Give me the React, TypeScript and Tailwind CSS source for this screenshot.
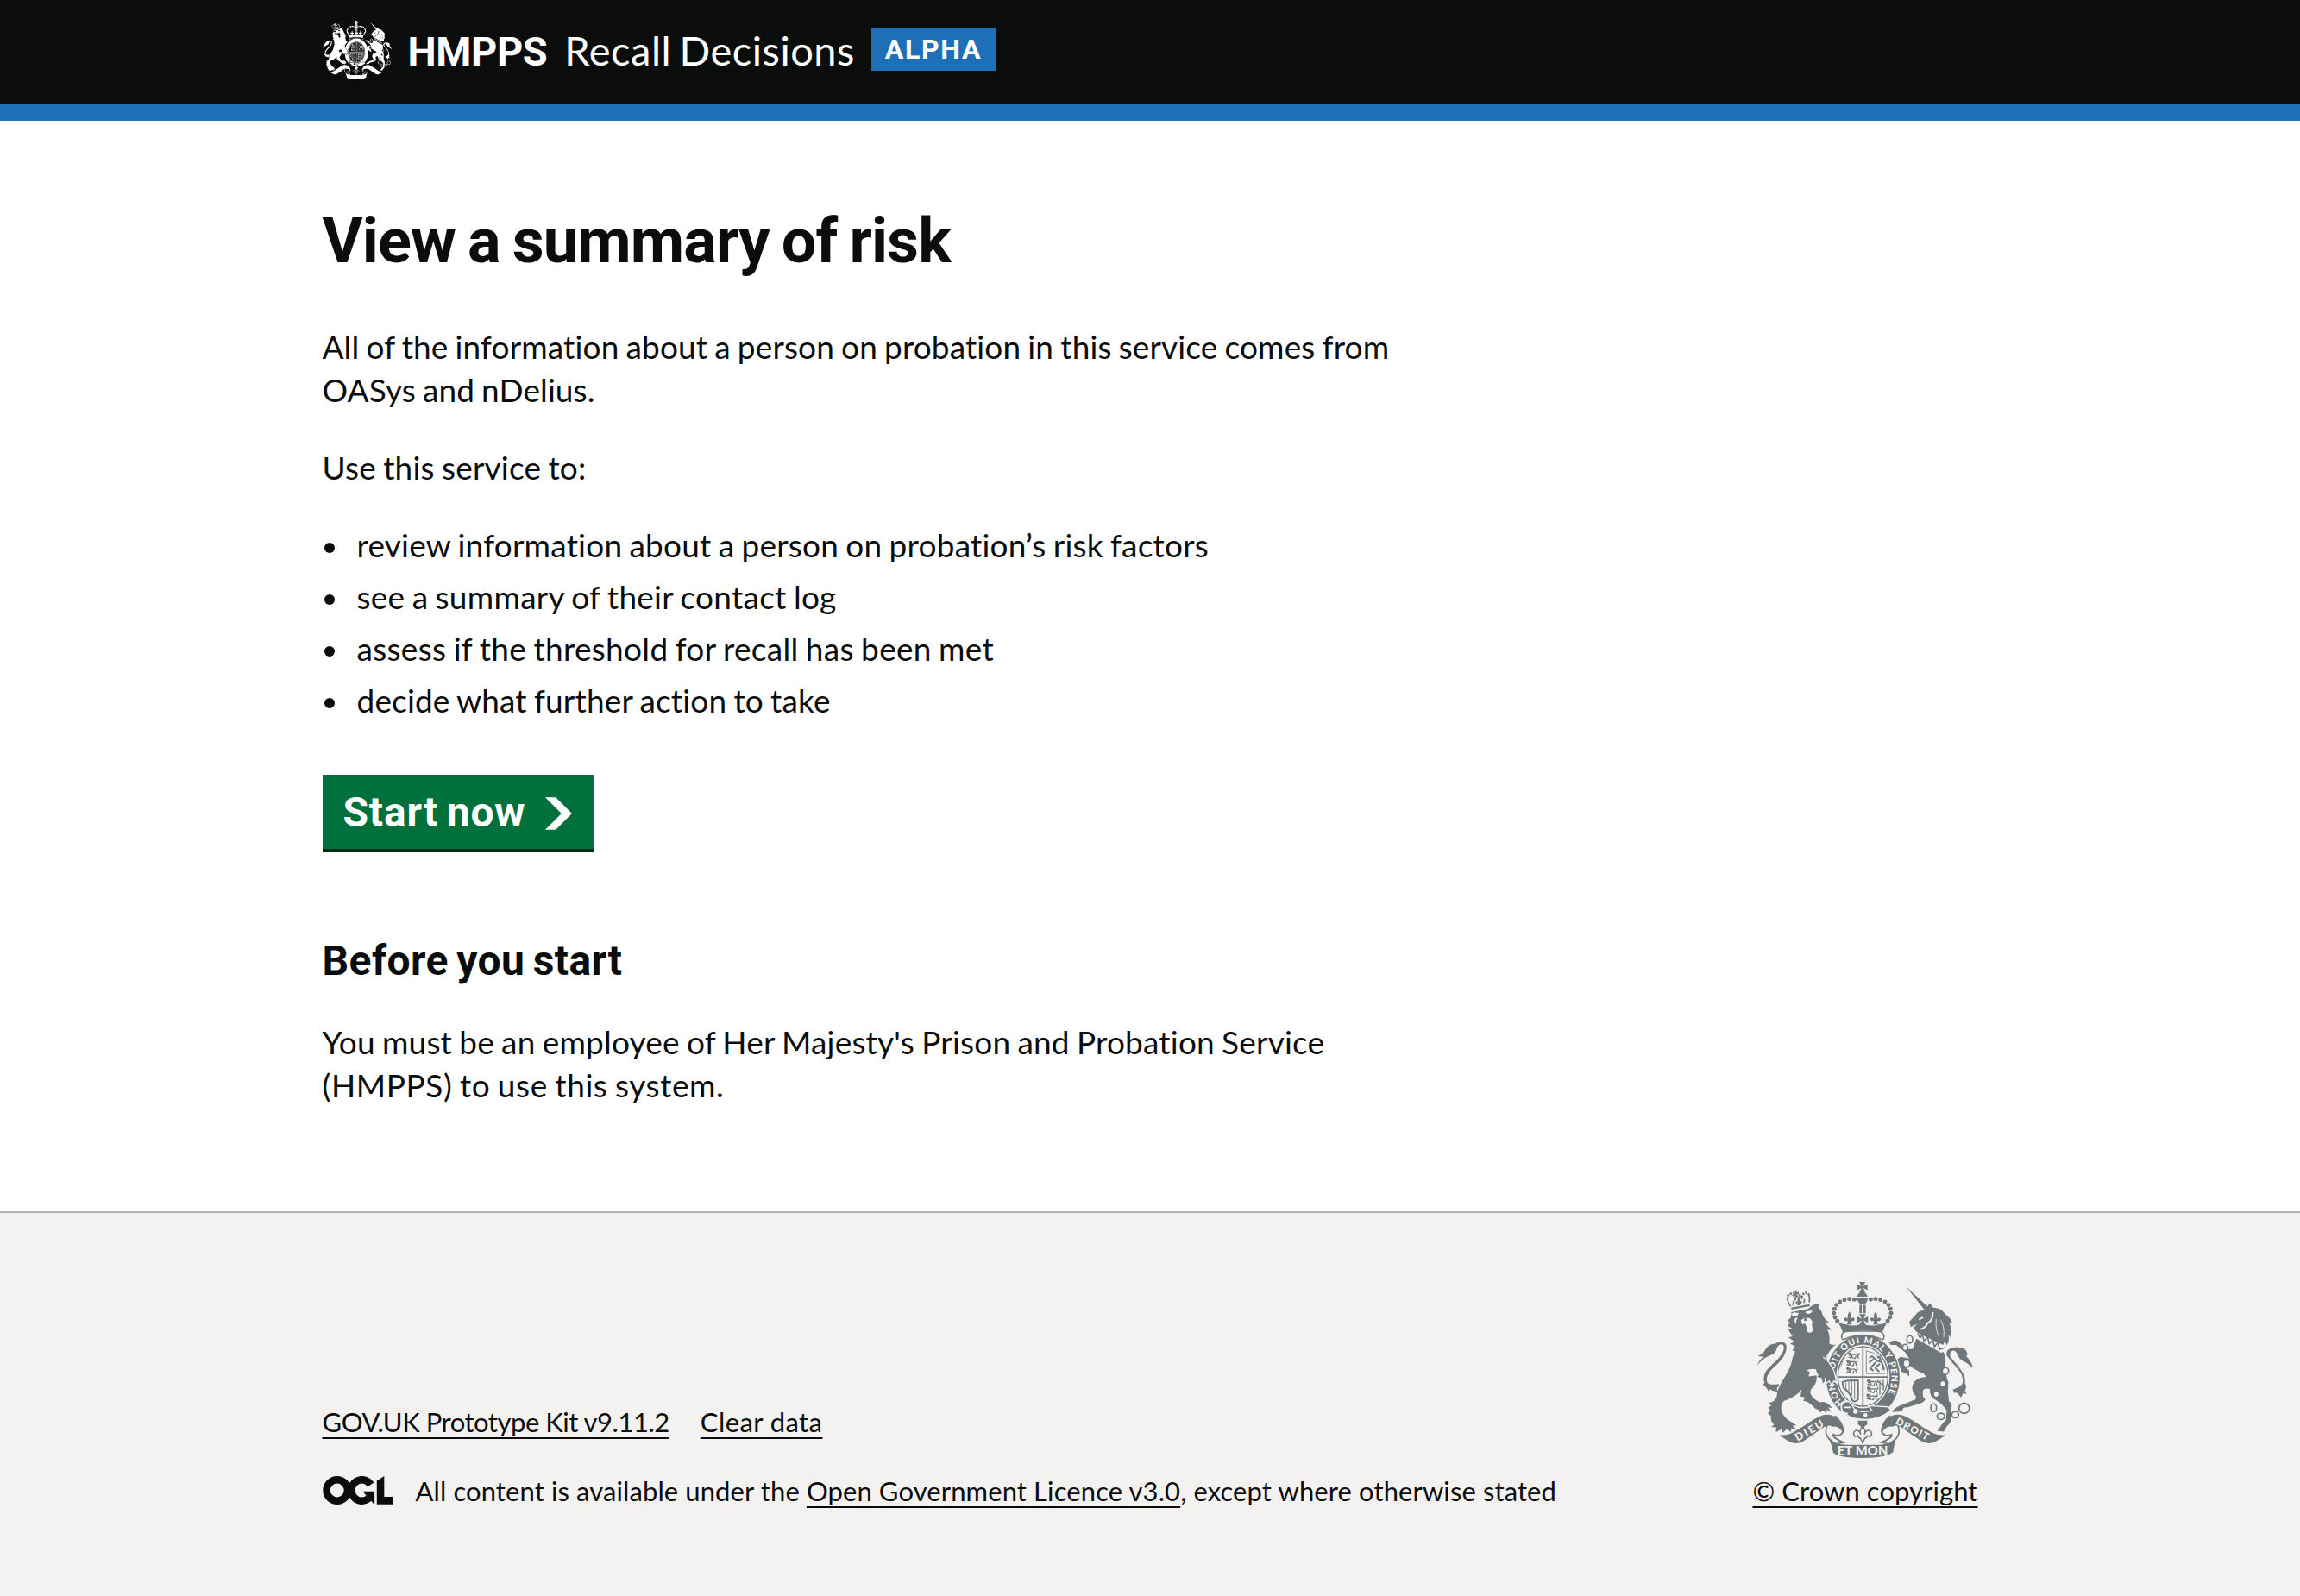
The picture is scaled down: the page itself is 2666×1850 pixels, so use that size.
import type { ReactNode } from "react";

type CrestProps = { className: string; paper: string; motto?: boolean };

/* One half of the royal crown's pearl arch; the other half is mirrored. */
const PEARLS: [number, number][] = [
  [421, 108], [404, 106], [387, 109], [371, 116], [359, 127], [352, 141],
  [350, 156], [354, 170], [362, 183],
];

/* A walking lion, used three times in each English quarter of the shield. */
function SmallLion({ x, y }: { x: number; y: number }) {
  return (
    <g transform={`translate(${x} ${y})`}>
      <path
        d="M2 3q5-5 9 0l3 3h14q6 0 6 5l3 9M4 9h9l-3 10M14 11l3 9M28 11l-3 9M34 8q8 0 4-8M2 15l9 2M20 19h7"
        fill="none"
        stroke="currentColor"
        strokeWidth="4"
        strokeLinejoin="round"
      />
      <circle cx="6" cy="4" r="4.5" fill="currentColor" />
    </g>
  );
}

function CrossPattee({ x, y, r }: { x: number; y: number; r: number }) {
  return (
    <path
      transform={`translate(${x} ${y}) scale(${r})`}
      fill="currentColor"
      d="M-.6-1H.6L.15-.15 1-.6V.6L.15.15.6 1H-.6L-.15.15-1 .6V-.6L-.15-.15z"
    />
  );
}

function Fleur({ x, y }: { x: number; y: number }) {
  return (
    <path
      transform={`translate(${x} ${y})`}
      fill="currentColor"
      d="M0-22Q9-10 5 4 11-4 17 1 21 7 13 12 9 8 5 13L9 23H-9L-5 13Q-9 8-13 12-21 7-17 1-11-4-5 4-9-10 0-22Z"
    />
  );
}

/* Ribbon with its fold, left side; mirrored for the right side. */
function RibbonSide({ paper }: { paper: string }) {
  return (
    <g>
      <path
        fill={paper}
        stroke="currentColor"
        strokeWidth="5"
        d="M326 548C316 574 326 590 345 602L352 612L384 606C362 596 344 588 348 578C362 586 380 580 383 566C382 545 372 530 355 515Z"
      />
      <path
        fill="currentColor"
        d="M160 580Q186 583 208 571C246 551 274 526 308 512C338 502 362 516 378 543Q385 560 381 573C374 556 358 547 345 552C336 544 324 547 310 556Q276 580 243 602Q222 612 205 607Q188 600 160 580Z"
      />
    </g>
  );
}

function RoyalArms({ className, paper, motto }: CrestProps) {
  return (
    <svg viewBox="84 47 750 613" preserveAspectRatio="none" className={className} aria-hidden="true">
      {/* Lion */}
      <g fill="currentColor">
        <path d="M84 338Q90 318 106 306Q94 308 86 305Q106 296 112 282Q124 262 146 262Q160 252 172 256Q190 262 184 286C176 318 148 336 130 356Q112 378 118 396Q126 408 158 402L160 410Q146 416 156 428Q140 430 128 420L122 428Q118 414 102 404Q112 402 106 388Q106 362 124 346C146 324 172 304 176 280Q178 266 168 264Q158 264 152 276Q150 296 126 304Q100 314 84 338Z" />
        <path d="M202 152L262 140Q280 120 298 124L296 136Q308 146 310 160Q316 176 334 188L320 187Q328 202 342 214L328 213Q338 236 334 262Q344 268 357 265Q338 280 328 300Q322 304 326 316Q342 334 348 356L360 388L356 408L349 390L343 410L335 390L326 404L322 388L312 400L306 378Q300 382 292 376L298 370Q288 366 290 352Q272 346 254 356Q262 358 266 360L262 376L290 372Q292 398 278 412Q266 422 268 434Q276 456 302 466Q316 462 332 472L344 486L330 484L342 500L326 492L324 504L312 494L302 502L298 492Q286 492 278 480Q258 460 244 462L248 448L234 446L238 420L230 432Q206 452 176 462Q164 474 168 496Q176 520 198 532L220 546L206 548L222 562L200 556L202 570L186 560L172 572L168 560L148 570L150 554L132 552L142 544Q128 530 132 514L120 504L130 496L122 484L132 478L124 468Q146 466 152 444C150 410 192 370 202 330Q206 306 216 288L206 286L214 270L198 262L212 254L192 240L206 236L192 214L204 208L188 200L198 188L188 182L200 172Z" />
      </g>
      <g fill="none" stroke="currentColor">
        <path d="M202 140L266 128" strokeWidth="7" />
        <path d="M200 132Q186 112 188 100M264 118Q268 104 262 88M228 124V98M208 128L210 112M246 120L248 106" strokeWidth="5" />
        <path d="M189 97Q204 76 216 104Q226 84 238 100Q246 76 264 90" strokeDasharray="7 4" strokeWidth="8" />
      </g>
      <CrossPattee x={218} y={86} r={10} />
      <CrossPattee x={228} y={118} r={10} />
      <g fill={paper}>
        <path d="M198 160L214 152Q222 156 228 154L224 164Q212 168 198 160ZM250 152Q262 144 276 148Q270 160 258 158Z" />
        <path d="M236 180Q248 168 268 174L276 186Q272 196 276 206Q280 222 266 224Q254 222 257 208L250 192L240 194Z" />
        <path d="M214 174l10-4-4 10-2 14-4-8z" />
      </g>
      <circle cx="251" cy="178" r="5" fill="currentColor" />

      {/* Unicorn */}
      <g fill="currentColor">
        <path d="M600 62L682 138L668 148Z" />
        <path d="M612 186L634 162Q644 146 668 144L684 120L694 136Q724 138 738 160Q754 170 762 188L752 190Q762 214 756 240L748 230Q754 256 742 268L736 252L730 266L642 226L634 216L626 206L640 194L628 198L618 204Z" />
        <path d="M642 232L724 284Q742 300 738 334Q736 366 748 396Q744 430 750 462Q764 472 758 486L756 520Q758 540 744 548L732 568L710 566Q724 542 740 528L742 494Q728 472 704 458Q682 446 684 420Q668 414 660 424Q656 448 668 456Q664 468 644 472L604 484Q590 482 586 498L552 500Q564 482 590 474L634 456Q640 446 628 438Q616 410 630 394Q644 378 672 378L662 366Q628 352 612 336L590 338L612 356L612 376L600 364L586 360L568 318L582 308L612 314L598 292L566 266L548 266L542 258Q560 246 574 254L600 276Q612 284 624 280Q632 256 642 232Z" />
        <path d="M834 346Q826 318 808 304L814 304Q816 280 790 276Q766 270 748 282Q736 294 746 308C758 326 784 350 794 370Q802 388 796 404Q784 416 764 422L768 434Q776 430 782 436L792 450L800 434L812 438L806 424Q814 412 806 400Q808 378 798 364C786 340 768 324 754 306Q752 290 764 286Q776 286 780 302Q790 322 810 328Z" />
      </g>
      <g fill="none" stroke={paper}>
        <path d="M652 212Q668 206 676 190Q694 182 694 152" strokeWidth="6" />
        <path d="M706 176Q702 212 716 236M722 180Q736 206 732 240" strokeWidth="2.5" />
        <path d="M646 178l14-8" strokeWidth="5" />
      </g>
      <path d="M638 222L742 276L724 294L636 244Z" fill={paper} />
      <path
        d="M642 226L650 242L658 232L664 252L676 240L682 262L694 248L700 272L712 258L718 282L734 276"
        fill="none"
        stroke="currentColor"
        strokeWidth="5"
      />
      <g fill={paper} stroke="currentColor" strokeWidth="5">
        <ellipse cx="614" cy="247" rx="10" ry="13" />
        <ellipse cx="598" cy="275" rx="9" ry="11" />
        <ellipse cx="603" cy="331" rx="12" ry="13" />
        <ellipse cx="738" cy="357" rx="11" ry="12" />
        <ellipse cx="729" cy="402" rx="10" ry="11" />
        <ellipse cx="706" cy="438" rx="10" ry="11" />
        <ellipse cx="697" cy="485" rx="10" ry="14" />
        <ellipse cx="722" cy="515" rx="13" ry="11" />
        <ellipse cx="772" cy="509" rx="12" ry="11" />
        <circle cx="803" cy="487" r="18" />
      </g>

      {/* Garter and shield */}
      <ellipse cx="451" cy="379" rx="132" ry="152" fill={paper} />
      <ellipse cx="451" cy="379" rx="128" ry="147" fill="currentColor" />
      {motto && (
        <g fill={paper} className="font-[Lato] font-black">
          <path id="mottoRing" fill="none" d="M384 470A100 120 0 1 1 516 470" />
          <text fontSize="31">
            <textPath href="#mottoRing" textLength="500">
              HONI SOIT QUI MAL Y PENSE
            </textPath>
          </text>
        </g>
      )}
      <ellipse cx="451" cy="376" rx="93" ry="111" fill={paper} />
      <ellipse cx="451" cy="376" rx="87" ry="104" fill="none" stroke="currentColor" strokeWidth="4" />
      <path d="M451 272V480M364 378H538" stroke="currentColor" strokeWidth="5" />
      <g>
        <SmallLion x={399} y={294} />
        <SmallLion x={392} y={319} />
        <SmallLion x={392} y={345} />
        <SmallLion x={464} y={388} />
        <SmallLion x={464} y={413} />
        <SmallLion x={462} y={438} />
      </g>
      <path
        d="M463 284V366H528M466 288Q512 294 526 350M374 340Q380 320 388 310"
        fill="none"
        stroke="currentColor"
        strokeWidth="2.5"
      />
      <path
        d="M474 312Q482 300 490 312L500 322Q518 322 520 338L524 354M488 316L472 328M496 326L476 348L488 356M510 332L494 346L508 360M512 320Q510 300 502 312"
        fill="none"
        stroke="currentColor"
        strokeWidth="6"
        strokeLinejoin="round"
      />
      <path
        d="M380 396Q394 388 434 390V456Q420 470 414 458C408 436 396 424 384 416Z"
        fill="none"
        stroke="currentColor"
        strokeWidth="6"
      />
      <path d="M392 398V420M402 394V430M412 392V442M422 392V456" stroke="currentColor" strokeWidth="3" />
      <path d="M510 390V440M522 388V424M500 392L528 410" stroke="currentColor" strokeWidth="4" />

      {/* Lion's forepaw over the garter */}
      <path
        fill="currentColor"
        stroke={paper}
        strokeWidth="4"
        d="M300 302Q326 312 340 338Q356 358 358 398L350 392L342 406L334 392L324 400L318 382L306 372Z"
      />
      <path fill="currentColor" d="M290 296L312 304L318 384L300 378L288 352Z" />

      {/* Strap, buckle and pendant */}
      <path
        d="M376 470Q392 452 410 470L420 488Q448 508 482 494L470 478L540 482L548 494Q500 534 436 524Q400 520 376 492Z"
        fill="currentColor"
        stroke={paper}
        strokeWidth="4"
      />
      <path d="M398 464Q376 462 376 484Q378 508 398 504M384 484H408" fill="none" stroke={paper} strokeWidth="5" />
      <circle cx="425" cy="498" r="8" fill={paper} />
      <circle cx="460" cy="511" r="7" fill={paper} />
      <path d="M434 530H466V544Q454 548 452 562H448Q446 548 434 544Z" fill="currentColor" />
      <path
        d="M450 552Q464 564 456 578Q462 562 474 564Q488 572 476 586L466 582L462 590H458L450 608L442 590H438L434 582L424 586Q412 572 426 564Q438 562 444 578Q436 564 450 552Z"
        fill={paper}
        stroke="currentColor"
        strokeWidth="4.5"
      />

      {/* Crown */}
      <path
        d="M386 218Q370 236 382 248Q420 232 451 232T520 248Q532 236 514 218Z"
        fill={paper}
        stroke="currentColor"
        strokeWidth="4.5"
      />
      <path
        d="M362 184Q378 196 392 194Q420 204 450 192Q480 204 508 194Q522 196 538 184Q524 204 518 224Q450 206 382 224Q376 204 362 184Z"
        fill="currentColor"
      />
      <g fill="currentColor">
        {PEARLS.map(([x, y]) => (
          <g key={`${x}-${y}`}>
            <circle cx={x} cy={y} r="7.5" />
            <circle cx={899 - x} cy={y} r="7.5" />
          </g>
        ))}
        <path d="M431 98Q434 82 449 82T467 98Z" />
        <path d="M431 104H468Q466 124 450 125Q434 124 431 104Z" />
        <path d="M439 127H447V156H439ZM453 127H461V156H453Z" />
      </g>
      <CrossPattee x={449} y={65} r={18} />
      <CrossPattee x={450} y={178} r={19} />
      <Fleur x={404} y={172} />
      <Fleur x={495} y={172} />

      {/* Ribbon */}
      <RibbonSide paper={paper} />
      <g transform="translate(899 0) scale(-1 1)">
        <RibbonSide paper={paper} />
      </g>
      <path
        d="M334 596Q356 612 392 614H508Q544 612 565 596Q558 618 556 640Q530 660 450 660Q370 660 348 642Q344 618 334 596Z"
        fill="currentColor"
      />
      {motto && (
        <g fill={paper} className="font-[Lato] font-black">
          <path id="mottoLeft" fill="none" d="M224 602Q270 578 330 540" />
          <path id="mottoRight" fill="none" d="M562 539Q610 568 680 602" />
          <text fontSize="37">
            <textPath href="#mottoLeft" textLength="108">
              DIEU
            </textPath>
          </text>
          <text fontSize="35">
            <textPath href="#mottoRight" textLength="126">
              DROIT
            </textPath>
          </text>
          <text x="362" y="651" fontSize="44" textLength="176">
            ET MON
          </text>
        </g>
      )}
    </svg>
  );
}

function OglLogo() {
  return (
    <svg
      viewBox="0 0 483.2 195.7"
      className="mb-[2px] h-[33px] w-[82px] shrink-0"
      role="img"
      aria-label="Open Government Licence"
    >
      <g fill="none" stroke="currentColor" strokeWidth="50.7">
        <circle cx="97.8" cy="97.8" r="72.4" />
        <path d="M329 58.5A72.4 72.4 0 1 0 316 152" />
      </g>
      <g fill="currentColor">
        <path d="M275 105.7h80v87.8h-3l-54-60.3z" />
        <path d="M370.8 32.4L421.5.1v142.7h61.6v50.7H370.8z" />
      </g>
    </svg>
  );
}

function FooterLink({ children, className = "" }: { children: ReactNode; className?: string }) {
  return (
    <a
      href="#"
      className={`underline decoration-2 underline-offset-[6px] [text-decoration-skip-ink:none] ${className}`}
    >
      {children}
    </a>
  );
}

const TASKS = [
  { text: "review information about a person on probation’s risk factors", spacing: "tracking-[0.22px]" },
  { text: "see a summary of their contact log", spacing: "tracking-[0.27px]" },
  { text: "assess if the threshold for recall has been met", spacing: "tracking-[0.31px]" },
  { text: "decide what further action to take", spacing: "tracking-[0.17px]" },
];

export default function App() {
  return (
    <div className="flex min-h-[1850px] flex-col bg-white font-[Lato,sans-serif] text-[37px] leading-[50px] text-[#0b0c0c] [font-variant-ligatures:none]">
      <header className="h-[140px] border-b-[20px] border-[#1d70b8] bg-[#0b0c0c] text-white">
        <div className="mx-auto flex h-[120px] w-[1919px] items-start">
          <RoyalArms className="mt-6 h-[68px] w-[80px] shrink-0" paper="#0b0c0c" />
          <span className="mt-[35px] ml-[19px] font-[Roboto,sans-serif] text-[47px] font-bold tracking-[-0.4px]">
            HMPPS
          </span>
          <span className="mt-[33px] ml-[20px] text-[47px] tracking-[0.5px] whitespace-nowrap [word-spacing:-3px]">
            Recall Decisions
          </span>
          <strong className="mt-8 ml-[19px] flex h-[50px] w-[144px] items-center justify-center bg-[#1d70b8] font-[Roboto,sans-serif] text-[32px] font-bold tracking-[1.7px]">
            ALPHA
          </strong>
        </div>
      </header>

      <main className="mx-auto w-[1919px] pt-[102px] pb-[121px] [word-spacing:-1.5px]">
        <h1 className="font-[Roboto,sans-serif] text-[72px] leading-[75px] font-bold tracking-[-0.85px] [word-spacing:-3px]">
          View a summary of risk
        </h1>
        <p className="mt-[60px] tracking-[0.13px]">
          All of the information about a person on probation in this service comes from
          <br />
          <span className="tracking-[0.1px]">OASys and nDelius.</span>
        </p>
        <p className="mt-10 tracking-[0.2px]">Use this service to:</p>
        <ul className="mt-10 space-y-[10px]">
          {TASKS.map(({ text, spacing }) => (
            <li key={text} className={`flex items-center ${spacing}`}>
              <span className="mt-[5px] mr-[26px] ml-[2px] size-3 rounded-full bg-[#0b0c0c]" />
              {text}
            </li>
          ))}
        </ul>
        <a
          href="#"
          className="mt-[61px] flex h-[86px] w-[314px] items-center bg-[#00703c] pt-[2px] pl-6 font-[Roboto,sans-serif] text-[48px] font-bold tracking-[0.8px] text-white shadow-[0_4px_0_#002d18] [word-spacing:-3px]"
        >
          Start now
          <svg viewBox="0 0 33 40" className="mt-[1px] ml-[23px] h-[38px] w-[31px]" aria-hidden="true">
            <path fill="currentColor" d="M0 0h13l20 20-20 20H0l20-20z" />
          </svg>
        </a>
        <h2 className="mt-[105px] font-[Roboto,sans-serif] text-[48px] font-bold tracking-[0.42px] [word-spacing:-3px]">
          Before you start
        </h2>
        <p className="mt-[44px] tracking-[0.2px]">
          You must be an employee of Her Majesty's Prison and Probation Service
          <br />
          <span className="tracking-[0.58px]">(HMPPS) to use this system.</span>
        </p>
      </main>

      <footer className="flex-1 border-t-2 border-[#b1b4b6] bg-[#f3f2f1] text-[31px] leading-[40px]">
        <div className="mx-auto flex w-[1919px] items-end justify-between pt-20">
          <div>
            <div className="flex gap-9">
              <FooterLink className="tracking-[-0.48px]">GOV.UK Prototype Kit v9.11.2</FooterLink>
              <FooterLink className="tracking-[0.42px]">Clear data</FooterLink>
            </div>
            <div className="mt-10 flex items-center">
              <OglLogo />
              <p className="ml-[26px] tracking-[0.1px]">
                All content is available under the <FooterLink>Open Government Licence v3.0</FooterLink>, except where
                otherwise stated
              </p>
            </div>
          </div>
          <div className="flex flex-col items-center">
            <RoyalArms className="h-[204px] w-[250px] text-[#6f777b]" paper="#f3f2f1" motto />
            <FooterLink className="mt-[18px] tracking-[0.06px]">© Crown copyright</FooterLink>
          </div>
        </div>
      </footer>
    </div>
  );
}
